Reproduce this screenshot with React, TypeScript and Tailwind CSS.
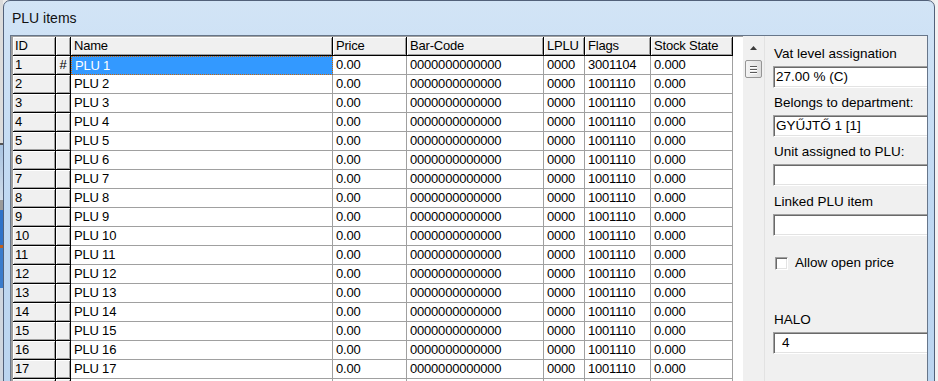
import React from "react";

const btnCell =
  "shrink-0 h-full flex items-center bg-[#f0f0f0] border-r border-b border-black shadow-[inset_1px_1px_0_#ffffff,inset_-1px_-1px_0_#a0a0a0] overflow-hidden whitespace-nowrap";
const dataCell =
  "shrink-0 h-full flex items-center pl-[3px] bg-white border-r border-b border-[#a0a0a0] overflow-hidden whitespace-nowrap";
const selCell =
  "shrink-0 h-full flex items-center pl-[3px] bg-[#3399ff] text-white border border-dotted border-[#c8650a] overflow-hidden whitespace-nowrap";
const inputCls =
  "w-[172px] h-[22px] shrink-0 bg-white border border-t-[#a0a0a0] border-l-[#a0a0a0] border-r-white border-b-white shadow-[inset_1px_1px_0_#696969,inset_-1px_-1px_0_#e3e3e3] flex items-center text-black";

function Row({ i, blank }: { i: number; blank?: boolean }) {
  const sel = i === 1;
  const t = (s: string) => (blank ? "" : s);
  return (
    <div className="flex h-[19px]">
      <div className={`w-[43px] pl-[2px] ${btnCell}`}>{t(String(i))}</div>
      <div className={`w-[15px] justify-center ${btnCell}`}>{sel ? "#" : ""}</div>
      <div className={`w-[262px] ${sel ? selCell : dataCell}`}>{t(`PLU ${i}`)}</div>
      <div className={`w-[74px] ${dataCell}`}>{t("0.00")}</div>
      <div className={`w-[137px] ${dataCell}`}>{t("0000000000000")}</div>
      <div className={`w-[41px] ${dataCell}`}>{t("0000")}</div>
      <div className={`w-[66px] ${dataCell}`}>{t(sel ? "3001104" : "1001110")}</div>
      <div className={`w-[82px] ${dataCell}`}>{t("0.000")}</div>
      <div className="flex-1 h-full bg-white" />
    </div>
  );
}

function Header() {
  const h = (w: string, label: string) => (
    <div className={`${w} pl-[3px] ${btnCell}`}>{label}</div>
  );
  return (
    <div className="flex h-[19px]">
      <div className={`w-[43px] pl-[2px] ${btnCell}`}>ID</div>
      <div className={`w-[15px] ${btnCell}`} />
      {h("w-[262px]", "Name")}
      {h("w-[74px]", "Price")}
      {h("w-[137px]", "Bar-Code")}
      {h("w-[41px]", "LPLU")}
      {h("w-[66px]", "Flags")}
      {h("w-[82px]", "Stock State")}
      <div className="flex-1 h-full bg-white" />
    </div>
  );
}

export default function App() {
  const rows = Array.from({ length: 17 }, (_, k) => k + 1);
  return (
    <div className="w-[938px] h-[381px] overflow-hidden flex bg-[#ececec] font-['Liberation_Sans',Arial,sans-serif] text-black">
      {/* desktop strip left */}
      <div className="w-[3px] shrink-0 flex flex-col">
        <div className="h-[143px] bg-[#dcdcdc]" />
        <div className="h-[2px] bg-[#555]" />
        <div className="h-[55px] bg-gradient-to-b from-[#a9c4e2] to-[#cfdbe8]" />
        <div className="h-[10px] bg-[#9a9a9a]" />
        <div className="h-[35px] bg-[#2f73c9]" />
        <div className="h-[3px] bg-[#c0601e]" />
        <div className="h-[40px] bg-[#3a7ccc]" />
        <div className="flex-1 bg-[#cfd6df]" />
      </div>

      {/* window */}
      <div className="w-[932px] shrink-0 h-[420px] border border-[#52617a] rounded-t-[7px] bg-gradient-to-b from-[#d2e4f6] via-[#bfd8f2] to-[#bad4ef] flex flex-col">
        <div className="h-[34px] shrink-0 flex items-center pl-[8px] text-[14px] text-[#111]">
          PLU items
        </div>
        <div className="flex-1 px-[6px] flex">
          <div className="flex-1 border border-[#67768a] flex overflow-hidden text-[13px] tracking-[-0.2px]">
            {/* grid area */}
            <div className="w-[754px] shrink-0 flex">
              <div className="flex-1 bg-white border-t border-l-2 border-[#a0a0a0] flex flex-col">
                <Header />
                {rows.map((i) => (
                  <Row key={i} i={i} />
                ))}
                <Row i={18} blank />
              </div>
              {/* scrollbar */}
              <div className="w-[22px] shrink-0 bg-[#f0f0f0] border-r border-[#e2e2e2] flex flex-col items-center">
                <svg className="mt-[10px]" width="7" height="4" viewBox="0 0 7 4">
                  <path d="M3.5 0 L7 4 L0 4 Z" fill="#3c3c3c" />
                </svg>
                <div className="mt-[10px] w-[17px] h-[18px] rounded-[2px] border border-[#959595] bg-gradient-to-r from-[#f4f4f4] to-[#dedede] flex flex-col items-center justify-center gap-[2px]">
                  <div className="w-[7px] h-px bg-[#5a5a5a] shadow-[0_1px_0_#ffffff]" />
                  <div className="w-[7px] h-px bg-[#5a5a5a] shadow-[0_1px_0_#ffffff]" />
                  <div className="w-[7px] h-px bg-[#5a5a5a] shadow-[0_1px_0_#ffffff]" />
                </div>
              </div>
            </div>

            {/* right panel */}
            <div className="flex-1 bg-[#f0f0f0] overflow-hidden pl-[8px] flex flex-col text-[13.5px] tracking-normal">
              <div className="mt-[10px] h-[16px] leading-[16px] pl-[1px] whitespace-nowrap">Vat level assignation</div>
              <div className={`mt-[4px] pl-[2px] ${inputCls}`}>27.00 % (C)</div>
              <div className="mt-[7px] h-[16px] leading-[16px] pl-[1px] whitespace-nowrap">Belongs to department:</div>
              <div className={`mt-[4px] pl-[2px] ${inputCls}`}>GYŰJTŐ 1 [1]</div>
              <div className="mt-[7px] h-[16px] leading-[16px] pl-[1px] whitespace-nowrap">Unit assigned to PLU:</div>
              <div className={`mt-[4px] ${inputCls}`} />
              <div className="mt-[8px] h-[16px] leading-[16px] pl-[1px] whitespace-nowrap">Linked PLU item</div>
              <div className={`mt-[4px] ${inputCls}`} />
              <div className="mt-[19px] h-[16px] flex items-center whitespace-nowrap">
                <div className="ml-[2px] w-[13px] h-[13px] bg-white border border-t-[#a0a0a0] border-l-[#a0a0a0] border-r-white border-b-white shadow-[inset_1px_1px_0_#696969,inset_-1px_-1px_0_#e3e3e3]" />
                <span className="ml-[7px] leading-[16px]">Allow open price</span>
              </div>
              <div className="mt-[41px] h-[16px] leading-[16px] pl-[1px] whitespace-nowrap">HALO</div>
              <div className={`mt-[4px] pl-[8px] ${inputCls}`}>4</div>
            </div>
          </div>
        </div>
      </div>

      {/* desktop strip right */}
      <div className="flex-1 bg-[#f2f2f2]" />
    </div>
  );
}
